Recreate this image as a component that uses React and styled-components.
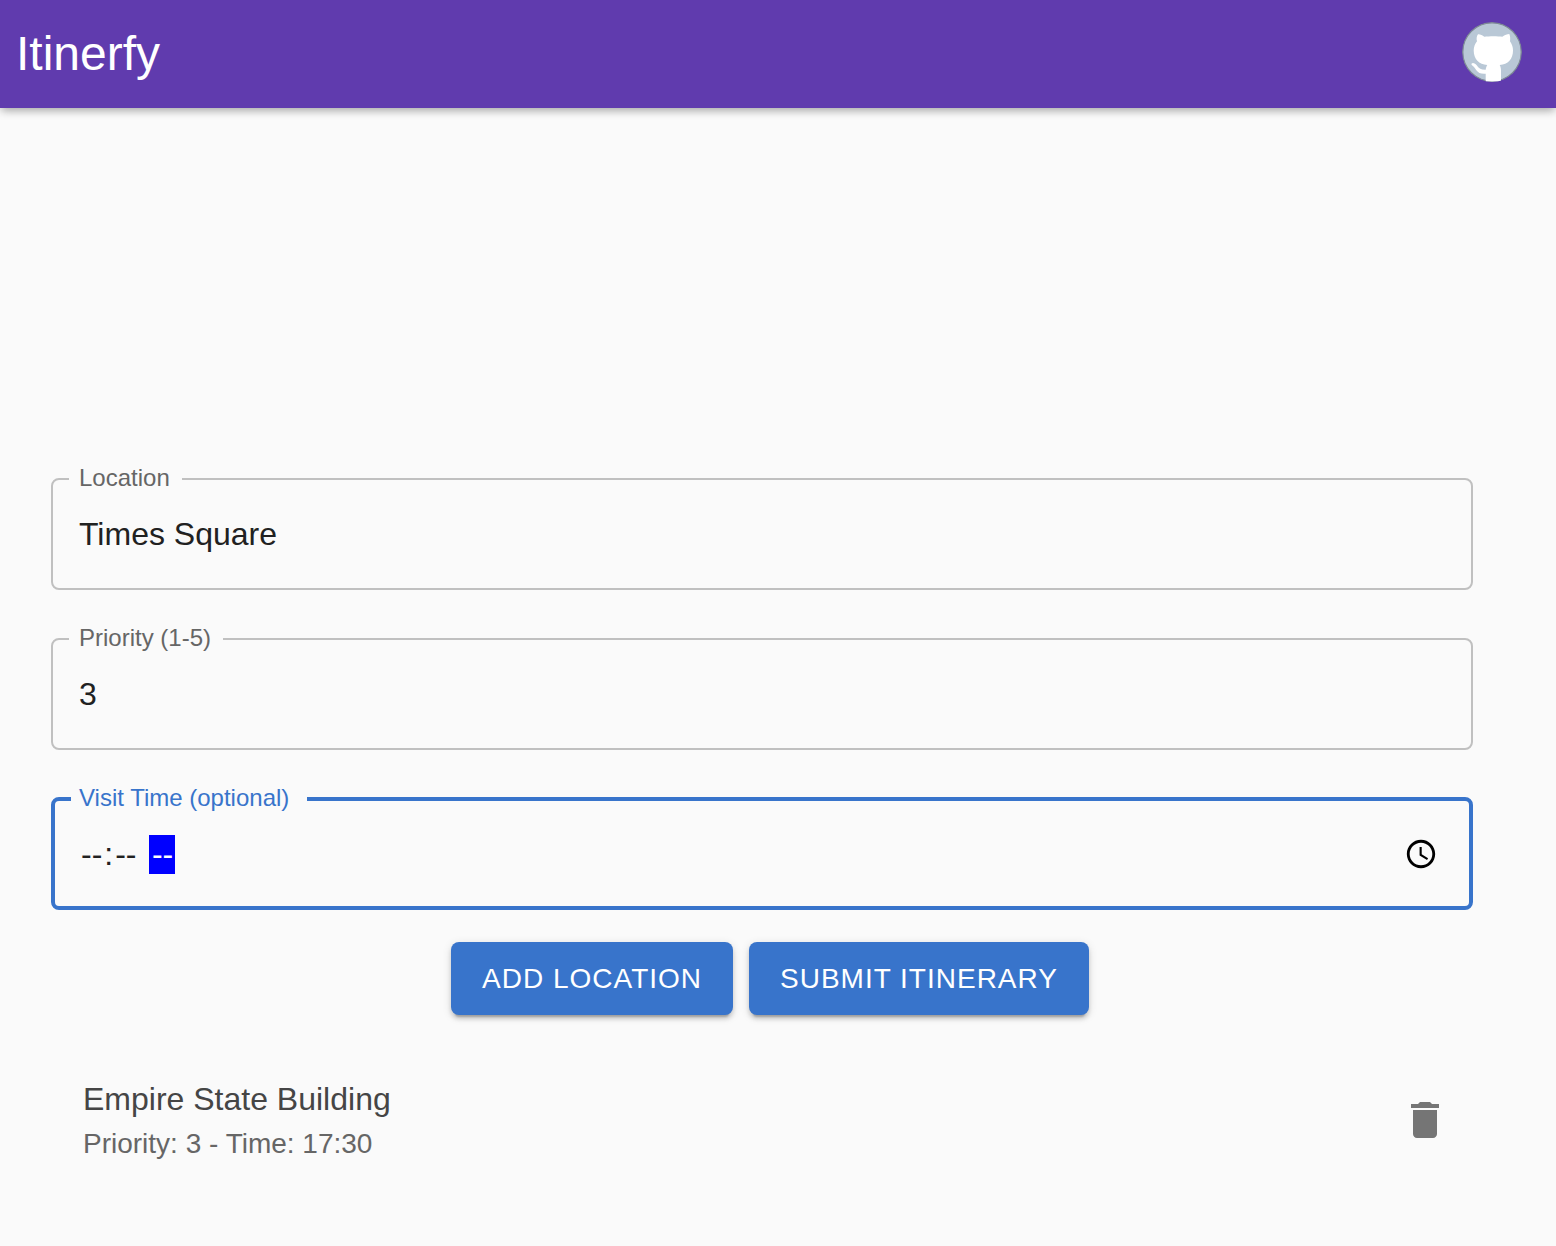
import React, { useState } from 'react';
import styled, { createGlobalStyle } from 'styled-components';

const GlobalStyle = createGlobalStyle`
  *, *::before, *::after {
    box-sizing: border-box;
  }

  body {
    margin: 0;
    background: #fafafa;
    color: #212121;
    font-family: "Liberation Sans", Arial, sans-serif;
  }
`;

const AppBar = styled.header`
  display: flex;
  align-items: center;
  justify-content: space-between;
  padding: 20px 32px 24px 16px;
  background: #603bae;
  color: #fff;
  box-shadow:
    0 4px 8px -2px rgba(0, 0, 0, 0.2),
    0 2px 10px rgba(0, 0, 0, 0.2);
`;

const Brand = styled.h1`
  margin: 0;
  padding-top: 4px;
  font-size: 48px;
  font-weight: 400;
  line-height: 60px;
`;

const AvatarButton = styled.button`
  display: flex;
  padding: 2px;
  border: 0;
  background: none;
  cursor: pointer;
`;

const Main = styled.main`
  padding: 357px 67px 80px 51px;
`;

const Form = styled.form`
  display: flex;
  flex-direction: column;
`;

const Fields = styled.div`
  display: flex;
  flex-direction: column;
  gap: 35px;
  margin-right: 16px;
`;

const FieldFrame = styled.fieldset`
  min-width: 0;
  min-height: 125px;
  margin: 0;
  padding: 0 16px;
  border: ${({ $active }) => ($active ? '4px solid #3874cb' : '2px solid #c0c0c0')};
  border-radius: 8px;
`;

const FieldLegend = styled.legend`
  padding: ${({ $active }) => ($active ? '0 18px 2px 8px' : '0 12px 2px 10px')};
  color: ${({ $active }) => ($active ? '#3874cb' : '#666')};
  font-size: 24px;
  line-height: 26px;
`;

const FieldInput = styled.input`
  display: block;
  width: 100%;
  height: 82px;
  padding: ${({ $active }) => ($active ? '0 12px 0 8px' : '0 10px')};
  border: 0;
  outline: 0;
  background: transparent;
  color: #212121;
  font-family: inherit;
  font-size: 32px;
  appearance: textfield;

  &::-webkit-datetime-edit-hour-field,
  &::-webkit-datetime-edit-minute-field {
    padding: 0 2px;
  }

  &::-webkit-datetime-edit-ampm-field {
    margin-left: 4px;
    padding: 4px 2px 4px 3px;
    background: ${({ $active }) => ($active ? '#00f' : 'transparent')};
    color: ${({ $active }) => ($active ? '#fff' : 'inherit')};
  }
`;

const Actions = styled.div`
  display: flex;
  justify-content: center;
  gap: 16px;
  margin-top: 32px;
`;

const ActionButton = styled.button`
  padding: 12px 31px;
  border: 0;
  border-radius: 8px;
  background: #3874cb;
  color: #fff;
  font-family: inherit;
  font-size: 28px;
  letter-spacing: 1px;
  line-height: 49px;
  text-transform: uppercase;
  cursor: pointer;
  box-shadow:
    0 6px 2px -4px rgba(0, 0, 0, 0.2),
    0 4px 4px rgba(0, 0, 0, 0.14),
    0 2px 10px rgba(0, 0, 0, 0.12);
`;

const StopList = styled.ul`
  margin: 44px 0 0;
  padding: 0;
  list-style: none;
`;

const StopItem = styled.li`
  display: flex;
  align-items: center;
  justify-content: space-between;
  padding: 16px 24px 16px 32px;
`;

const StopName = styled.p`
  margin: 0;
  color: #454545;
  font-size: 32px;
  line-height: 48px;
`;

const StopDetails = styled.p`
  margin: 0;
  color: #666;
  font-size: 28px;
  line-height: 42px;
`;

const IconButton = styled.button`
  display: flex;
  padding: 16px;
  border: 0;
  border-radius: 50%;
  background: none;
  color: #757575;
  cursor: pointer;
`;

function OctocatAvatar() {
  return (
    <svg width="60" height="60" viewBox="0 0 60 60" aria-hidden="true">
      <clipPath id="avatar-circle">
        <circle cx="30" cy="30" r="30" />
      </clipPath>
      <g clipPath="url(#avatar-circle)">
        <circle cx="30" cy="30" r="29.3" fill="#b9c8d6" stroke="#7d8995" strokeWidth="1.4" />
        <path
          fill="#fff"
          d="M16 12.2C18 12 20.5 13.3 22.3 14.7C27 14 36 14 40.3 14.7C43 12.8 45 12 47.3 12C48.3 14 48.4 17 48 19.3C50 22 51 25.3 51 28.5C51 37 46 42.5 37.7 43C39 45 39 48 39 49.3V59.4H23.7V51.7C14 52.5 14.5 46 9.7 42.9C9 41.8 10 41 11 41C16 41.5 14.5 48 23.7 47.7C23.9 45.5 24.7 44 25.3 43C17 42.5 11.7 37 11.7 28.5C11.7 25 13 22 15 19.3C14.3 17 14.6 14 16 12.2Z"
        />
      </g>
    </svg>
  );
}

function TrashIcon() {
  return (
    <svg width="48" height="48" viewBox="0 0 24 24" fill="currentColor" aria-hidden="true">
      <path d="M6 19c0 1.1.9 2 2 2h8c1.1 0 2-.9 2-2V7H6v12zM19 4h-3.5l-1-1h-5l-1 1H5v2h14V4z" />
    </svg>
  );
}

function Field({ id, label, active, ...inputProps }) {
  return (
    <FieldFrame $active={active}>
      <FieldLegend $active={active}>
        <label htmlFor={id}>{label}</label>
      </FieldLegend>
      <FieldInput id={id} $active={active} {...inputProps} />
    </FieldFrame>
  );
}

export default function App() {
  const [location, setLocation] = useState('Times Square');
  const [priority, setPriority] = useState('3');
  const [time, setTime] = useState('');
  const [stops, setStops] = useState([
    { name: 'Empire State Building', priority: '3', time: '17:30' },
  ]);

  const addStop = () => setStops([...stops, { name: location, priority, time }]);
  const removeStop = (index) => setStops(stops.filter((_, i) => i !== index));

  return (
    <>
      <GlobalStyle />
      <AppBar>
        <Brand>Itinerfy</Brand>
        <AvatarButton type="button" aria-label="Account">
          <OctocatAvatar />
        </AvatarButton>
      </AppBar>
      <Main>
        <Form onSubmit={(event) => event.preventDefault()}>
          <Fields>
            <Field
              id="location"
              label="Location"
              type="text"
              value={location}
              onChange={(event) => setLocation(event.target.value)}
            />
            <Field
              id="priority"
              label="Priority (1-5)"
              type="number"
              min="1"
              max="5"
              value={priority}
              onChange={(event) => setPriority(event.target.value)}
            />
            <Field
              id="visit-time"
              label="Visit Time (optional)"
              type="time"
              active
              value={time}
              onChange={(event) => setTime(event.target.value)}
            />
          </Fields>
          <Actions>
            <ActionButton type="button" onClick={addStop}>Add Location</ActionButton>
            <ActionButton type="submit">Submit Itinerary</ActionButton>
          </Actions>
        </Form>
        <StopList>
          {stops.map((stop, index) => (
            <StopItem key={index}>
              <div>
                <StopName>{stop.name}</StopName>
                <StopDetails>
                  {`Priority: ${stop.priority}${stop.time ? ` - Time: ${stop.time}` : ''}`}
                </StopDetails>
              </div>
              <IconButton type="button" aria-label={`Delete ${stop.name}`} onClick={() => removeStop(index)}>
                <TrashIcon />
              </IconButton>
            </StopItem>
          ))}
        </StopList>
      </Main>
    </>
  );
}
